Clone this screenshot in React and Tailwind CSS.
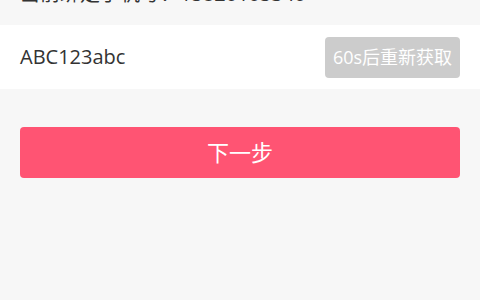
export default function App() {
  return (
    <div
      className="h-[300px] w-[480px] overflow-hidden bg-[#f7f7f7]"
      style={{ fontFamily: '"Open Sans", "Noto Sans CJK SC", sans-serif' }}
    >
      <div className="flow-root h-[25px] px-5">
        <p className="-mt-[21px] text-[20px] leading-[30px] text-[#333]">当前绑定手机号：15820105340</p>
      </div>
      <div className="flex h-[64px] items-center justify-between bg-white pl-5 pr-5">
        <span className="text-[20px] text-[#333]">ABC123abc</span>
        <button className="h-[41px] w-[135px] rounded-[4px] bg-[#cccccc] text-[18px] text-white">
          60s后重新获取
        </button>
      </div>
      <div className="px-5 pt-[38px]">
        <button className="h-[51px] w-full rounded-[4px] bg-[#ff5473] text-[22px] text-white">
          下一步
        </button>
      </div>
    </div>
  );
}
